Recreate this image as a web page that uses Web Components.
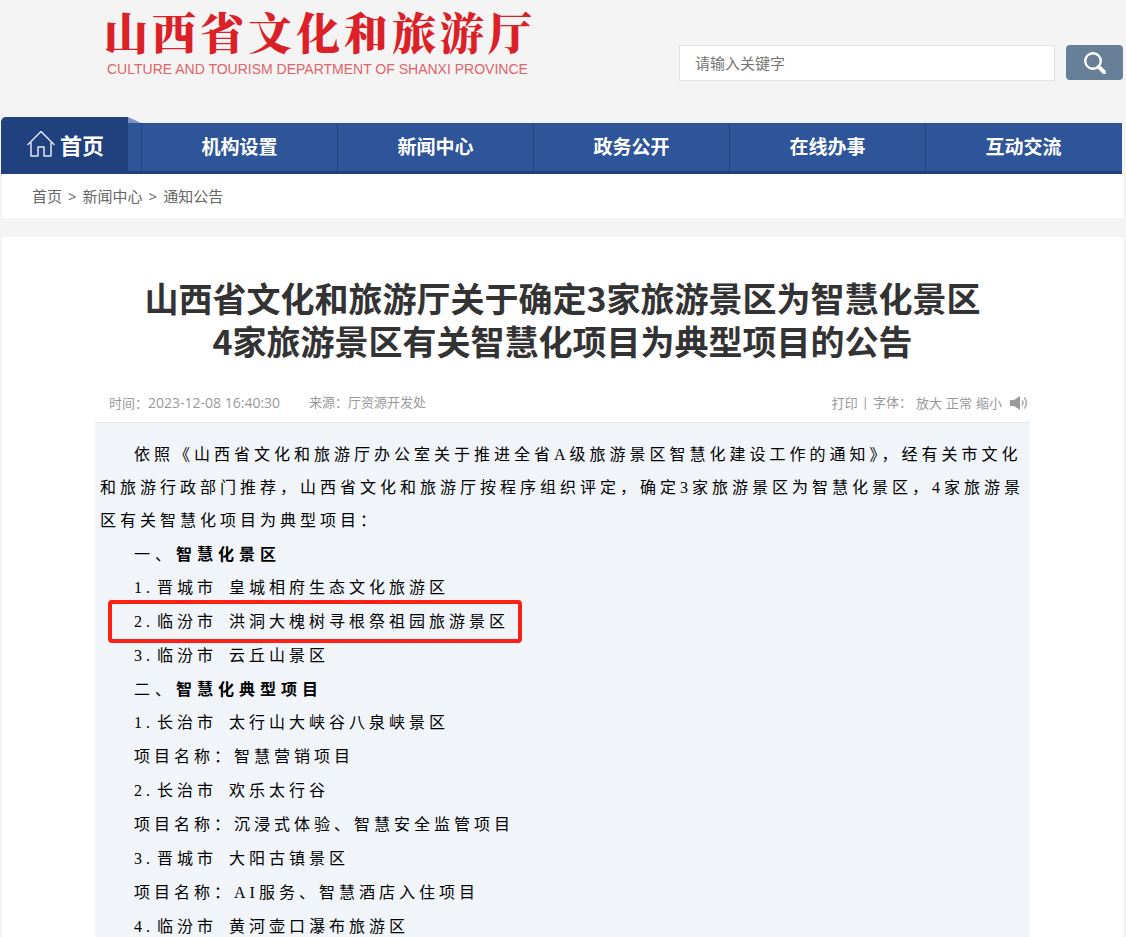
<!DOCTYPE html>
<html lang="zh-CN">
<head>
<meta charset="utf-8">
<meta name="viewport" content="width=device-width, initial-scale=1">
<title>山西省文化和旅游厅</title>
<style>
body {
    margin: 0;
    background: #f4f4f4;
    color: #666;
    font-family: "Open Sans", "Noto Sans CJK SC", sans-serif;
    font-size: 15px;
}
</style>
</head>
<body>
<site-header></site-header>
<site-nav>
    <nav-item href="#org">机构设置</nav-item>
    <nav-item href="#news">新闻中心</nav-item>
    <nav-item href="#gov">政务公开</nav-item>
    <nav-item href="#service">在线办事</nav-item>
    <nav-item href="#contact">互动交流</nav-item>
</site-nav>
<bread-crumb></bread-crumb>
<article-page>
    <span slot="title">山西省文化和旅游厅关于确定3家旅游景区为智慧化景区<br>4家旅游景区有关智慧化项目为典型项目的公告</span>
    <article-meta slot="meta"></article-meta>
    <text-line>依照《山西省文化和旅游厅办公室关于推进全省A级旅游景区智慧化建设工作的通知》，经有关市文化和旅游行政部门推荐，山西省文化和旅游厅按程序组织评定，确定3家旅游景区为智慧化景区，4家旅游景区有关智慧化项目为典型项目：</text-line>
    <text-line heading>一、<b>智慧化景区</b></text-line>
    <scenic-item no="1." city="晋城市">皇城相府生态文化旅游区</scenic-item>
    <scenic-item no="2." city="临汾市" marked>洪洞大槐树寻根祭祖园旅游景区</scenic-item>
    <scenic-item no="3." city="临汾市">云丘山景区</scenic-item>
    <text-line heading>二、<b>智慧化典型项目</b></text-line>
    <scenic-item no="1." city="长治市">太行山大峡谷八泉峡景区</scenic-item>
    <text-line>项目名称：智慧营销项目</text-line>
    <scenic-item no="2." city="长治市">欢乐太行谷</scenic-item>
    <text-line>项目名称：沉浸式体验、智慧安全监管项目</text-line>
    <scenic-item no="3." city="晋城市">大阳古镇景区</scenic-item>
    <text-line>项目名称：AI服务、智慧酒店入住项目</text-line>
    <scenic-item no="4." city="临汾市">黄河壶口瀑布旅游区</scenic-item>
</article-page>

<script>
window.customElements.define("site-header", class extends HTMLElement {
    constructor() {
        super();
        const shadowRoot = this.attachShadow({mode: "open"});
        shadowRoot.innerHTML = `
            <a class="logo" href="#home">
                <span class="cn">山西省文化和旅游厅</span>
                <span class="en">CULTURE AND TOURISM DEPARTMENT OF SHANXI PROVINCE</span>
            </a>
            <form role="search">
                <input type="text" placeholder="请输入关键字" aria-label="请输入关键字">
                <button type="submit" aria-label="搜索">
                    <svg width="24" height="24" viewBox="0 0 24 24" fill="none" stroke="#fff">
                        <circle cx="10" cy="10" r="7.8" stroke-width="2.4"/>
                        <path d="M15.8 15.8L21 21" stroke-width="4" stroke-linecap="round"/>
                    </svg>
                </button>
            </form>

            <style>
            :host {
                display: flex;
                justify-content: space-between;
                align-items: flex-start;
                height: 117px;
                padding: 0 3px 0 104px;
            }
            .logo {
                display: flex;
                flex-direction: column;
                color: #db2127;
                text-decoration: none;
                white-space: nowrap;
                padding-top: 2px;
            }
            .cn {
                font-family: "Noto Serif CJK SC", "Noto Sans CJK SC", serif;
                font-size: 44px;
                font-weight: 900;
                letter-spacing: 4px;
                line-height: 58px;
            }
            .en {
                padding-left: 3px;
                color: #de6469;
                font-family: "Liberation Sans", Arial, sans-serif;
                font-size: 14px;
                line-height: 18px;
            }
            form {
                display: flex;
                gap: 11px;
                margin: 45px 0 0;
            }
            input {
                box-sizing: border-box;
                width: 376px;
                height: 36px;
                padding: 0 15px;
                border: 1px solid #e2e2e2;
                background: #fff;
                font: inherit;
            }
            input::placeholder {
                color: #757575;
            }
            button {
                display: flex;
                align-items: center;
                justify-content: center;
                width: 57px;
                height: 35px;
                padding: 0;
                border: 0;
                border-radius: 4px;
                background: #687f98;
                cursor: pointer;
            }
            </style>
        `;
        shadowRoot.querySelector("form").addEventListener("submit", e => e.preventDefault());
    }
});

window.customElements.define("site-nav", class extends HTMLElement {
    constructor() {
        super();
        const shadowRoot = this.attachShadow({mode: "open"});
        shadowRoot.innerHTML = `
            <a class="home" href="#home">
                <svg width="28" height="28" viewBox="0 0 28 28" fill="none" stroke="#dfe7f5" stroke-width="1.5">
                    <path d="M1 14.5L14 1.5L27 14.5M4 13V26H11V17H17V26H24V13" stroke-linejoin="round" stroke-linecap="round"/>
                </svg>
                首页
            </a>
            <svg class="fold" width="14" height="6" viewBox="0 0 14 6"><path d="M0 0L13 6H0Z" fill="#8093c0"/></svg>
            <nav><slot></slot></nav>

            <style>
            :host {
                display: flex;
                align-items: flex-end;
                height: 57px;
                margin: 0 4px 0 1px;
                color: #fff;
                font-weight: bold;
            }
            .home {
                display: flex;
                align-items: center;
                justify-content: center;
                gap: 5px;
                box-sizing: border-box;
                width: 127px;
                height: 57px;
                padding: 0 0 4px 2px;
                border-radius: 5px 0 0 0;
                background: #20407e;
                color: #fff;
                font-size: 22px;
                text-decoration: none;
            }
            .fold {
                align-self: flex-start;
                margin-right: -14px;
            }
            nav {
                flex: 1;
                display: flex;
                box-sizing: border-box;
                height: 51px;
                padding: 0 1px 0 13px;
                border-bottom: 3px solid #20407e;
                background: #2e5499;
            }
            </style>
        `;
    }
});

window.customElements.define("nav-item", class extends HTMLElement {
    constructor() {
        super();
        const shadowRoot = this.attachShadow({mode: "open"});
        shadowRoot.innerHTML = `
            <a href="${this.getAttribute("href")}"><slot></slot></a>

            <style>
            :host {
                flex: 1;
                display: block;
                border-left: 1px solid #20407e;
            }
            a {
                display: block;
                color: #fff;
                font-size: 19px;
                line-height: 48px;
                text-align: center;
                text-decoration: none;
            }
            a:hover {
                background: #20407e;
            }
            </style>
        `;
    }
});

window.customElements.define("bread-crumb", class extends HTMLElement {
    constructor() {
        super();
        const shadowRoot = this.attachShadow({mode: "open"});
        shadowRoot.innerHTML = `
            <a href="#home">首页</a>
            <span>&gt;</span>
            <a href="#news">新闻中心</a>
            <span>&gt;</span>
            <a href="#notice">通知公告</a>

            <style>
            :host {
                display: flex;
                gap: 6px;
                margin: 0 3px 19px 2px;
                padding: 0 30px;
                background: #fff;
                line-height: 44px;
            }
            a {
                color: inherit;
                text-decoration: none;
            }
            </style>
        `;
    }
});

window.customElements.define("article-page", class extends HTMLElement {
    constructor() {
        super();
        const shadowRoot = this.attachShadow({mode: "open"});
        shadowRoot.innerHTML = `
            <article>
                <h1><slot name="title"></slot></h1>
                <slot name="meta"></slot>
                <div class="content"><slot></slot></div>
            </article>

            <style>
            :host {
                display: block;
                margin: 0 3px 0 2px;
                padding: 39px 93px 0;
                background: #fff;
            }
            h1 {
                margin: 0 -20px;
                color: #333;
                font-family: "Noto Sans CJK SC", sans-serif;
                font-size: 34px;
                line-height: 43px;
                text-align: center;
            }
            .content {
                padding: 15px 0 20px 5px;
                border-top: 1px solid #e3e6ea;
                background: #f1f5fa;
                color: #000;
                font-family: "Liberation Serif", "Noto Sans CJK SC", serif;
                font-size: 16px;
                letter-spacing: 4px;
                line-height: 33px;
            }
            </style>
        `;
    }
});

window.customElements.define("article-meta", class extends HTMLElement {
    constructor() {
        super();
        const shadowRoot = this.attachShadow({mode: "open"});
        shadowRoot.innerHTML = `
            <div class="info">
                <span>时间：<time>2023-12-08 16:40:30</time></span>
                <span>来源：厅资源开发处</span>
            </div>
            <div class="tools">
                <button type="button">打印</button>
                <span>|</span>
                <span>字体：</span>
                <button type="button">放大</button>
                <button type="button">正常</button>
                <button type="button">缩小</button>
                <button type="button" class="sound" aria-label="朗读">
                    <svg width="18" height="14" viewBox="0 0 18 14">
                        <path d="M0 4H4L10 0V14L4 10H0Z" fill="#999"/>
                        <path d="M12 4.2Q14 7 12 9.8M14.3 1.5Q18.5 7 14.3 12.5" fill="none" stroke="#aaa" stroke-width="1.5"/>
                    </svg>
                </button>
            </div>

            <style>
            :host {
                display: flex;
                justify-content: space-between;
                margin-top: 22px;
                padding: 0 2px 0 14px;
                color: #999;
                font-size: 13px;
                line-height: 37px;
            }
            .info {
                display: flex;
                gap: 29px;
            }
            time {
                font-size: 14px;
            }
            .tools {
                display: flex;
                gap: 4px;
            }
            button {
                padding: 0;
                border: 0;
                background: none;
                color: inherit;
                font: inherit;
                cursor: pointer;
            }
            .sound {
                display: flex;
                align-items: center;
                margin-left: 4px;
            }
            </style>
        `;
    }
});

window.customElements.define("text-line", class extends HTMLElement {
    constructor() {
        super();
        const shadowRoot = this.attachShadow({mode: "open"});
        shadowRoot.innerHTML = `
            <slot></slot>

            <style>
            :host {
                display: block;
                margin-bottom: 1px;
                text-indent: 34px;
            }
            :host([heading]) {
                margin-bottom: 0;
                letter-spacing: 5px;
            }
            </style>
        `;
    }
});

window.customElements.define("scenic-item", class extends HTMLElement {
    constructor() {
        super();
        const shadowRoot = this.attachShadow({mode: "open"});
        shadowRoot.innerHTML = `
            <div class="row">
                <span class="no">${this.getAttribute("no")}</span>
                <span class="city">${this.getAttribute("city")}</span>
                <slot></slot>
            </div>

            <style>
            :host {
                display: flex;
                margin-bottom: 1px;
                padding-left: 34px;
            }
            .row {
                display: flex;
                position: relative;
            }
            .no {
                width: 23px;
            }
            .city {
                margin-right: 12px;
            }
            /* red frame lies over the row and its neighbours' leading */
            :host([marked]) .row::after {
                content: "";
                position: absolute;
                inset: -5px -13px -5px -26px;
                border: 4px solid #ff2015;
                border-radius: 4px;
            }
            </style>
        `;
    }
});
</script>
</body>
</html>
